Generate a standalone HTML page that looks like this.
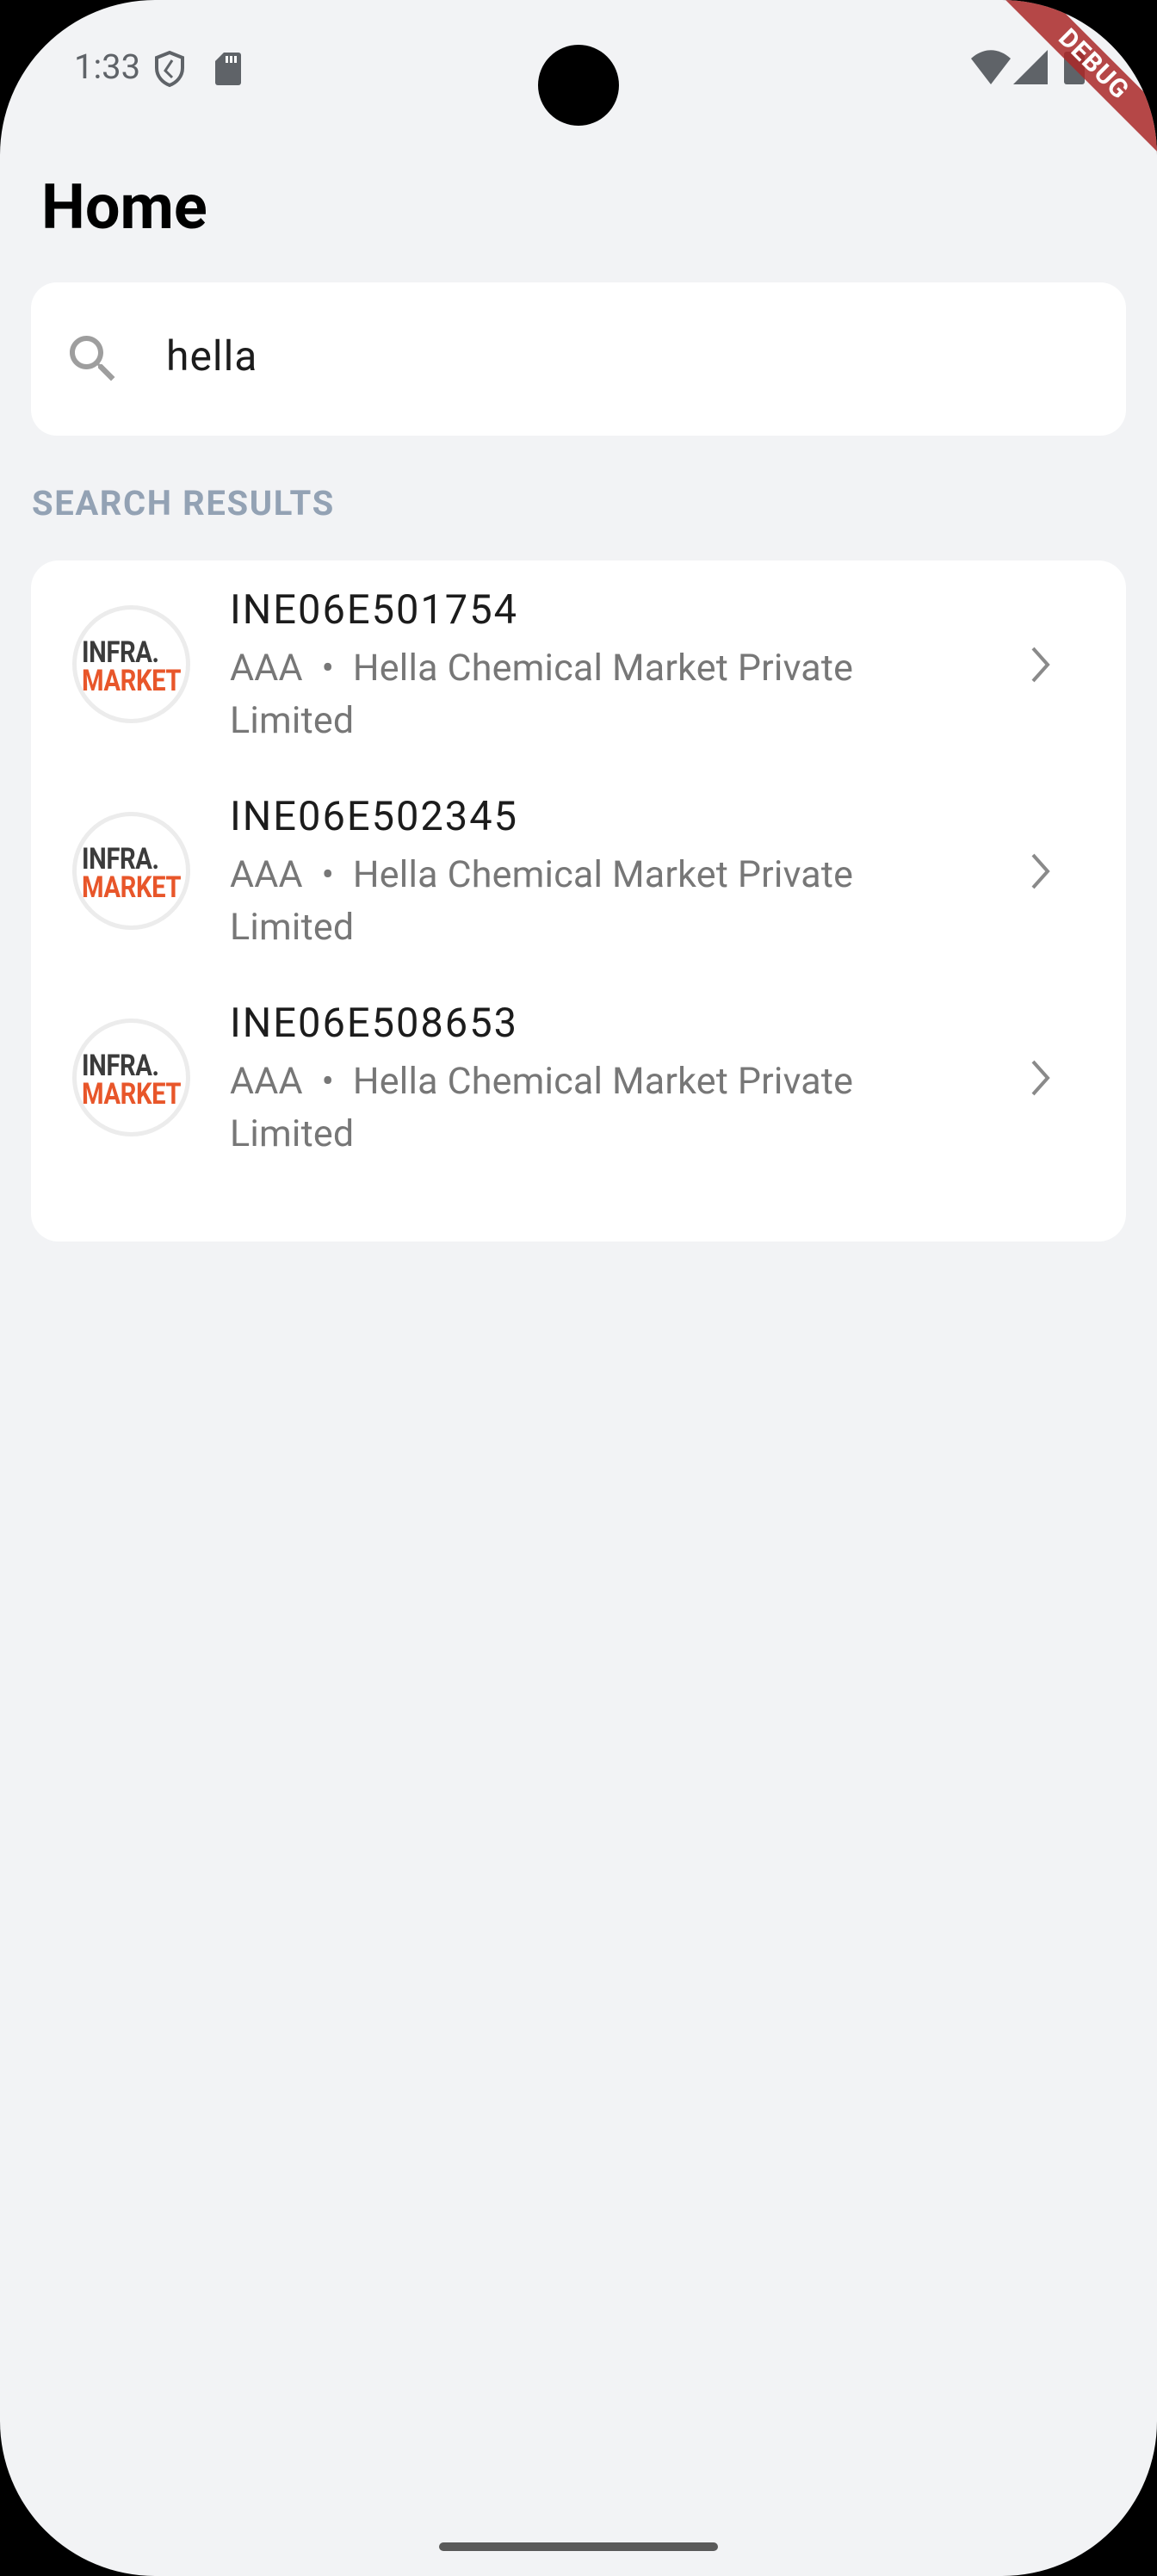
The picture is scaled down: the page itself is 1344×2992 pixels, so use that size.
<!DOCTYPE html>
<html><head><meta charset="utf-8">
<style>
html,body{margin:0;padding:0;background:#000;}
body{width:1344px;height:2992px;position:relative;overflow:hidden;font-family:"Roboto","Liberation Sans",sans-serif;}
#screen{position:absolute;left:0;top:0;width:1344px;height:2992px;background:#f2f3f5;border-radius:180px;overflow:hidden;}
.abs{position:absolute;}
.title{left:48px;top:196px;font-size:72px;font-weight:bold;color:#000;line-height:90px;}
.search{left:36px;top:328px;width:1272px;height:178px;background:#fff;border-radius:30px;}
.hella{left:193px;top:384px;font-size:48px;color:#1c1c1c;line-height:60px;letter-spacing:1px;}
.sr{left:37px;top:560px;font-size:40px;font-weight:bold;color:#93a2b4;letter-spacing:1.6px;line-height:50px;}
.card{left:36px;top:651px;width:1272px;height:791px;background:#fff;border-radius:32px;}
.logo{width:127px;height:127px;border:5px solid #ececec;border-radius:50%;background:#fff;}
.logo span{position:absolute;font-weight:bold;font-size:34px;line-height:34px;transform-origin:0 0;transform:scaleX(0.86);letter-spacing:-0.5px;}
.id{font-size:47px;color:#1c1c1c;line-height:56px;letter-spacing:2px;}
.sub{font-size:43px;color:#777;line-height:61px;width:800px;letter-spacing:0.2px;}
</style></head><body>
<div id="screen">
  <div class="abs" style="left:86px;top:52px;font-size:40px;color:#5f6368;line-height:52px;">1:33</div>
  <svg class="abs" style="left:178px;top:58px" width="38" height="44" viewBox="0 0 38 44"><path d="M19 3 L34 9 V21 C34 31 27 38 19 41 C11 38 4 31 4 21 V9 Z" fill="none" stroke="#5f6368" stroke-width="4"/><path d="M22 12 L14 24 L22 32" fill="none" stroke="#5f6368" stroke-width="3"/></svg>
  <svg class="abs" style="left:250px;top:61px" width="30" height="38" viewBox="0 0 30 38"><path d="M10 0 H27 a3 3 0 0 1 3 3 V35 a3 3 0 0 1 -3 3 H3 a3 3 0 0 1 -3 -3 V10 Z" fill="#5f6368"/><rect x="12" y="4" width="3" height="8" fill="#fff"/><rect x="17" y="4" width="3" height="8" fill="#fff"/><rect x="22" y="4" width="3" height="8" fill="#fff"/></svg>
  <div class="abs" style="left:625px;top:52px;width:94px;height:94px;border-radius:50%;background:#000;"></div>
  <svg class="abs" style="left:1128px;top:58px" width="46" height="40" viewBox="0 0 46 40"><path d="M0 10 C14 -3 32 -3 46 10 L23 40 Z" fill="#5f6368"/></svg>
  <svg class="abs" style="left:1177px;top:58px" width="40" height="40" viewBox="0 0 40 40"><path d="M40 0 V40 H0 Z" fill="#5f6368"/></svg>
  <div class="abs" style="left:1236px;top:60px;width:24px;height:38px;background:#5f6368;border-radius:3px;"></div>
  <div class="abs" style="left:1120px;top:56px;width:300px;height:38px;background:rgba(170,40,40,0.85);transform:rotate(45deg);transform-origin:50% 50%;color:#fff;font-weight:bold;font-size:30px;line-height:38px;text-align:center;letter-spacing:1px;">DEBUG</div>

  <div class="abs title">Home</div>

  <div class="abs search"></div>
  <svg class="abs" style="left:72px;top:381px" width="72" height="72" viewBox="0 0 24 24"><path fill="#9e9e9e" d="M15.5 14h-.79l-.28-.27C15.41 12.59 16 11.110 16 9.5 16 5.91 13.09 3 9.5 3S3 5.91 3 9.5 5.91 16 9.5 16c1.61 0 3.09-.59 4.230-1.57l.27.28v.79l5 4.99L20.49 19l-4.99-5zm-6 0C7.01 14 5 11.99 5 9.5S7.01 5 9.5 5 14 7.01 14 9.5 11.99 14 9.5 14z"/></svg>
  <div class="abs hella">hella</div>

  <div class="abs sr">SEARCH RESULTS</div>

  <div class="abs card"></div>

  <div class="abs logo" style="left:84px;top:703px;"><span style="left:6px;top:33px;color:#3b3b3b;">INFRA.</span><span style="left:6px;top:66px;color:#e8562a;">MARKET</span></div>
  <div class="abs id" style="left:267px;top:681px;">INE06E501754</div>
  <div class="abs sub" style="left:267px;top:746px;">AAA &nbsp;•&nbsp; Hella Chemical Market Private<br>Limited</div>
  <svg class="abs" style="left:1190px;top:748px" width="36" height="48" viewBox="0 0 36 48"><polyline points="10,5 27,24 10,43" fill="none" stroke="#8a8a8a" stroke-width="4"/></svg>

  <div class="abs logo" style="left:84px;top:943px;"><span style="left:6px;top:33px;color:#3b3b3b;">INFRA.</span><span style="left:6px;top:66px;color:#e8562a;">MARKET</span></div>
  <div class="abs id" style="left:267px;top:921px;">INE06E502345</div>
  <div class="abs sub" style="left:267px;top:986px;">AAA &nbsp;•&nbsp; Hella Chemical Market Private<br>Limited</div>
  <svg class="abs" style="left:1190px;top:988px" width="36" height="48" viewBox="0 0 36 48"><polyline points="10,5 27,24 10,43" fill="none" stroke="#8a8a8a" stroke-width="4"/></svg>

  <div class="abs logo" style="left:84px;top:1183px;"><span style="left:6px;top:33px;color:#3b3b3b;">INFRA.</span><span style="left:6px;top:66px;color:#e8562a;">MARKET</span></div>
  <div class="abs id" style="left:267px;top:1161px;">INE06E508653</div>
  <div class="abs sub" style="left:267px;top:1226px;">AAA &nbsp;•&nbsp; Hella Chemical Market Private<br>Limited</div>
  <svg class="abs" style="left:1190px;top:1228px" width="36" height="48" viewBox="0 0 36 48"><polyline points="10,5 27,24 10,43" fill="none" stroke="#8a8a8a" stroke-width="4"/></svg>

  <div class="abs" style="left:510px;top:2953px;width:324px;height:10px;border-radius:5px;background:#5a5a5a;"></div>
</div>
</body></html>
